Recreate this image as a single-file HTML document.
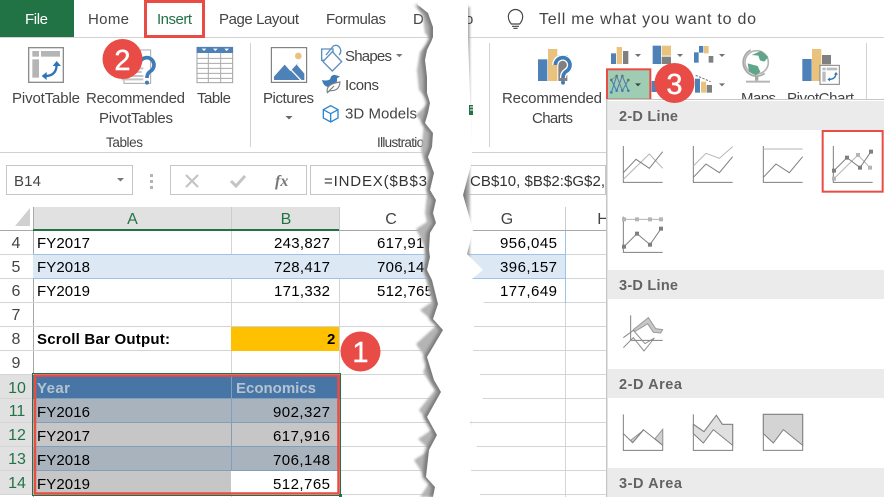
<!DOCTYPE html>
<html><head><meta charset="utf-8"><style>
html,body{margin:0;padding:0;background:#fff;width:884px;height:497px;overflow:hidden}
svg{display:block}
text{font-family:"Liberation Sans",sans-serif}
.r{font-size:15px;fill:#444}
.c{font-size:15px;fill:#000}
.h{font-size:16px;fill:#444;text-anchor:middle}
.g{font-size:16px;fill:#217346;text-anchor:middle}
.m{font-size:14.500px;font-weight:bold;fill:#636363}
</style></head><body>
<svg width="884" height="497" viewBox="0 0 884 497" xmlns="http://www.w3.org/2000/svg">
<defs>
<filter id="b" x="-20%" y="-5%" width="140%" height="110%"><feGaussianBlur stdDeviation="1"/></filter>
<filter id="b2" x="-20%" y="-5%" width="140%" height="110%"><feGaussianBlur stdDeviation="1.600"/></filter>
<clipPath id="co"><rect x="468" y="0" width="10" height="37"/></clipPath>
<clipPath id="cm"><rect x="700" y="40" width="184" height="59"/></clipPath>
</defs>
<rect width="884" height="497" fill="#fff"/>

<!-- tabs -->
<rect x="0" y="0" width="74" height="37" fill="#217346"/>
<rect x="204" y="37" width="680" height="1" fill="#d2d2d2"/>
<rect x="0" y="37" width="145" height="1" fill="#d2d2d2"/>
<text x="25" y="24" font-size="15" fill="#fff" textLength="23">File</text>
<text class="r" x="88" y="24" textLength="41">Home</text>
<text x="157" y="24" font-size="15" fill="#217346" textLength="35">Insert</text>
<text class="r" x="219" y="24" textLength="80">Page Layout</text>
<text class="r" x="326" y="24" textLength="60">Formulas</text>
<text class="r" x="413" y="24" textLength="34">Data</text>
<rect x="145.500" y="1.500" width="58" height="35" fill="none" stroke="#e84c44" stroke-width="3"/>

<!-- ribbon bottom -->
<rect x="0" y="152" width="606" height="1" fill="#d2d2d2"/>
<rect x="250" y="43" width="1" height="104" fill="#d2d2d2"/>
<rect x="489" y="43" width="1" height="104" fill="#d2d2d2"/>
<rect x="866" y="43" width="1" height="56" fill="#d2d2d2"/>

<text class="r" x="12" y="103" textLength="68">PivotTable</text>
<text class="r" x="86" y="103" textLength="99">Recommended</text>
<text class="r" x="99" y="123" textLength="74">PivotTables</text>
<text class="r" x="197" y="103" textLength="34">Table</text>
<text x="106" y="147" font-size="13.500" fill="#444" textLength="37">Tables</text>
<text class="r" x="263" y="103" textLength="51">Pictures</text>
<path d="M285.500,116l3.500,3.500 3.500,-3.500z" fill="#666"/>
<text class="r" x="345" y="61" textLength="47">Shapes</text>
<path d="M396,54h6.500l-3.250,3.250z" fill="#777"/>
<text class="r" x="345" y="90" textLength="34">Icons</text>
<text class="r" x="345" y="118.500" textLength="72">3D Models</text>
<text x="377" y="147" font-size="13.500" fill="#444" textLength="60">Illustrations</text>

<!-- left ribbon icons -->
<g transform="scale(.33333)">
 <rect x="86" y="143" width="104" height="104" fill="#fff" stroke="#8c8c8c" stroke-width="4"/>
 <rect x="97" y="153" width="20" height="17" fill="#b5b5b5"/><rect x="123" y="153" width="57" height="17" fill="#b5b5b5"/><rect x="97" y="178" width="20" height="55" fill="#b5b5b5"/>
 <path d="M136,228Q168,228 170,196" fill="none" stroke="#2e75b6" stroke-width="7"/>
 <path d="M158,198l12,-15 13,15zM140,216l-15,12 15,12z" fill="#2e75b6"/>
 <rect x="372" y="150" width="80" height="100" fill="#fff" stroke="#a8a8a8" stroke-width="3"/>
 <path d="M365,205h65M365,216h60M365,228h65M365,238h65" stroke="#c4c4c4" stroke-width="6"/>
 <path d="M418,195a22,22 0 1 1 33,19q-10,6 -10,20" fill="none" stroke="#3f7cb7" stroke-width="11"/>
 <circle cx="441" cy="248" r="6" fill="#3f7cb7"/>
 <rect x="591" y="142" width="107" height="106" fill="#fff" stroke="#a0a0a0" stroke-width="3"/>
 <rect x="590" y="141" width="109" height="18" fill="#4e81b8"/>
 <path d="M605,146h14l-7,7zM639,146h14l-7,7zM673,146h14l-7,7z" fill="#fff"/>
 <path d="M591,175h107M591,190h107M591,205h107M591,220h107M591,235h107M625,159v89M662,159v89" stroke="#aaa" stroke-width="3" fill="none"/>
 <rect x="814" y="143" width="106" height="104" fill="#fff" stroke="#6a6a6a" stroke-width="3"/>
 <circle cx="895" cy="168" r="10" fill="#e9c37d"/>
 <path d="M822,240v-10l32,-36 18,20 18,-20 23,27v19zM876,220l-6,-5 24,-26" fill="#4e81b8"/>
 <path d="M867,203l40,42" stroke="#fff" stroke-width="4"/>
 <path d="M965,147h34v34h-34zM978,165l22,-27q12,-6 20,6q6,12 -3,21" fill="#fff" stroke="#5b8fc0" stroke-width="4"/>
 <path d="M997,155l28,30 -28,28 -28,-28z" fill="#fff" stroke="#5b8fc0" stroke-width="4"/>
 <path d="M966,240q14,4 24,-2l3,-8q6,-8 16,-4l11,3 -9,6q2,20 -18,26h-10q-14,-4 -17,-21z" fill="#3f7cb7"/>
 <path d="M982,278q-6,-26 38,-32q-2,28 -30,26zM982,278l20,-20" fill="#fff" stroke="#808080" stroke-width="3.500"/>
 <path d="M992,317l22,12v25l-22,12 -22,-12v-25zM970,329l22,12 22,-12M992,341v25" fill="none" stroke="#2e86cf" stroke-width="4"/>
</g>

<!-- formula bar -->
<rect x="6.500" y="165.500" width="126" height="29" fill="#fff" stroke="#c6c6c6"/>
<text x="14" y="186" font-size="15" fill="#444" textLength="27">B14</text>
<path d="M117,178h7l-3.500,3.500z" fill="#777"/>
<path d="M150,174h3v3h-3zM150,180h3v3h-3zM150,186h3v3h-3z" fill="#b4b4b4"/>
<rect x="170.500" y="165.500" width="136" height="29" fill="#fff" stroke="#c6c6c6"/>
<path d="M186,175l12,12M198,175l-12,12" stroke="#c4c4c4" stroke-width="2.200"/>
<path d="M231,181l5,5 9,-10" stroke="#c4c4c4" stroke-width="3" fill="none"/>
<text x="275" y="186" font-size="16" font-style="italic" font-weight="bold" fill="#777" style="font-family:'Liberation Serif',serif">fx</text>
<rect x="310.500" y="165.500" width="295" height="29" fill="#fff" stroke="#c6c6c6"/>
<text x="324" y="186" font-size="15" fill="#333" textLength="108">=INDEX($B$3:</text>

<!-- sheet -->
<path d="M15,226L30,208V226Z" fill="#d0d0d0"/>
<rect x="33" y="207" width="198" height="23" fill="#e1e1e1"/>
<rect x="231" y="207" width="108" height="23" fill="#e1e1e1"/>
<rect x="231" y="207" width="1" height="23" fill="#ccc"/>
<rect x="339" y="207" width="1" height="23" fill="#ccc"/>
<rect x="565" y="207" width="1" height="23" fill="#ccc"/>
<rect x="33" y="207" width="1" height="290" fill="#a8a8a8"/>
<rect x="0" y="230" width="606" height="1" fill="#a8a8a8"/>
<rect x="33" y="229" width="306" height="2" fill="#217346"/>
<text class="g" x="132.500" y="224">A</text>
<text class="g" x="286" y="224">B</text>
<text class="h" x="391" y="224">C</text>
<text class="h" x="507" y="224">G</text>
<text class="h" x="603" y="224">H</text>

<!-- row head shading -->
<rect x="0" y="375" width="33" height="120" fill="#e1e1e1"/>

<!-- grid -->
<path d="M0,254.500H606M0,278.500H606M0,302.500H606M0,326.500H606M0,350.500H606M0,374.500H606M0,398.500H606M0,422.500H606M0,446.500H606M0,470.500H606M0,494.500H606" stroke="#d4d4d4" fill="none"/>
<path d="M231.500,231V497M339.500,231V497M565.500,231V497" stroke="#d4d4d4" fill="none"/>

<!-- row 5 -->
<rect x="33" y="254" width="533" height="25" fill="#dce9f5"/>
<rect x="33" y="254" width="533" height="1" fill="#9dc3e6"/>
<rect x="33" y="278" width="533" height="1" fill="#9dc3e6"/>
<rect x="565" y="231" width="1" height="72" fill="#9dc3e6"/>

<!-- row 8 -->
<rect x="231" y="327" width="108" height="24" fill="#ffc000"/>

<!-- table -->
<rect x="33" y="375" width="307" height="24" fill="#4776a6"/>
<rect x="33" y="399" width="307" height="24" fill="#a9b3bd"/>
<rect x="33" y="423" width="307" height="24" fill="#c6c6c6"/>
<rect x="33" y="447" width="307" height="24" fill="#a9b3bd"/>
<rect x="33" y="471" width="198" height="24" fill="#c6c6c6"/>
<rect x="231" y="471" width="108" height="24" fill="#fff"/>
<path d="M35,398.500H339M35,422.500H339M35,446.500H339M35,470.500H339" stroke="#7f9fbd" fill="none"/>
<path d="M231.500,375V471" stroke="#7f9fbd" fill="none"/>
<rect x="32.500" y="373.500" width="308" height="122" fill="none" stroke="#217346"/>
<rect x="35" y="375.500" width="303.500" height="118" fill="none" stroke="#e84c44" stroke-width="2.500"/>
<rect x="339" y="494" width="3" height="3" fill="#217346"/>

<!-- row headers -->
<g font-size="16" text-anchor="middle" fill="#444">
<text x="16" y="248">4</text><text x="16" y="272">5</text><text x="16" y="296">6</text><text x="16" y="320">7</text><text x="16" y="344">8</text><text x="16" y="368">9</text>
</g>
<g font-size="16" text-anchor="middle" fill="#217346">
<text x="17" y="393">10</text><text x="17" y="416">11</text><text x="17" y="440">12</text><text x="17" y="464">13</text><text x="17" y="488">14</text>
</g>

<!-- cells -->
<text class="c" x="37" y="248" textLength="53">FY2017</text>
<text class="c" x="37" y="272" textLength="53">FY2018</text>
<text class="c" x="37" y="296" textLength="53">FY2019</text>
<text class="c" x="274" y="248" textLength="56">243,827</text>
<text class="c" x="274" y="272" textLength="56">728,417</text>
<text class="c" x="274" y="296" textLength="56">171,332</text>
<text class="c" x="377" y="248" textLength="56">617,916</text>
<text class="c" x="377" y="272" textLength="56">706,148</text>
<text class="c" x="377" y="296" textLength="56">512,765</text>
<text class="c" x="37" y="344" font-weight="bold" textLength="133">Scroll Bar Output:</text>
<text class="c" x="327" y="344" font-weight="bold">2</text>
<text x="37" y="393" font-size="15" font-weight="bold" fill="#b5c3d1" textLength="33">Year</text>
<text x="236" y="393" font-size="15" font-weight="bold" fill="#b5c3d1" textLength="80">Economics</text>
<text class="c" x="37" y="417" textLength="53">FY2016</text>
<text class="c" x="37" y="441" textLength="53">FY2017</text>
<text class="c" x="37" y="465" textLength="53">FY2018</text>
<text class="c" x="37" y="489" textLength="53">FY2019</text>
<text class="c" x="273" y="417" textLength="57">902,327</text>
<text class="c" x="273" y="441" textLength="57">617,916</text>
<text class="c" x="273" y="465" textLength="57">706,148</text>
<text class="c" x="273" y="489" textLength="57">512,765</text>

<!-- torn paper: shadow band, dark inner shadow, white strip -->
<path d="M417,7L423,17L425,33L431,40L420,52L417,70L419,90L430,102L416,115L424,125L421,150L428,175L427,195L425,213L427,222L416,229L425,247L425,275L432,302L420,310L437,325L416,344L425,357L428,362L423,372L435,390L419,410L433,429L418,439L430,450L414,460L425,477L430,482L420,497H470V7Z" fill="#b4b4b4" filter="url(#b)"/>
<path d="M418,5L428,13L433,27L433,37L431,42L427,50L425,60L427,77L427,93L430,103L428,113L425,123L433,133L432,147L428,157L434,173L430,190L436,200L433,213L436,223L430,233L429,250L430,257L427,270L432,280L438,304L433,319L443,330L427,357L434,380L441,392L427,417L437,435L429,450L426,477L435,487L433,497H470V5Z" fill="#7a7a7a" filter="url(#b2)" transform="translate(-3.500,0)"/>
<path d="M418,0V5L428,13L433,27L433,37L431,42L427,50L425,60L427,77L427,93L430,103L428,113L425,123L433,133L432,147L428,157L434,173L430,190L436,200L433,213L436,223L430,233L429,250L430,257L427,270L432,280L438,304L433,319L443,330L427,357L434,380L441,392L427,417L437,435L429,450L426,477L435,487L433,497H480V494L471,470L477,446L470,422L483,398L480,374L473,350L474,326L484,302L472,279L483,270L467,254L473,230L463,195L471,165L472,152L468,37V0Z" fill="#fff"/>

<!-- right of tear -->
<text class="r" x="465" y="24" clip-path="url(#co)">o</text>
<rect x="469" y="105" width="4" height="10" fill="#217346"/>
<path d="M470,107h3M470,110h3" stroke="#fff"/>
<g transform="translate(440,0) scale(.33333)">
 <path d="M214,72q-9,-10 -9,-22a21,21 0 1 1 43,0q0,12 -9,22zM216,79h21M220,85h13" fill="none" stroke="#444" stroke-width="3.500"/>
</g>
<text x="539" y="24" font-size="16" fill="#444" textLength="217">Tell me what you want to do</text>
<rect x="484" y="37" width="400" height="1" fill="#d2d2d2"/>
<text x="470" y="186" font-size="15" fill="#333" textLength="135">CB$10, $B$2:$G$2,</text>
<text class="c" x="500" y="248" textLength="57">956,045</text>
<text class="c" x="500" y="272" textLength="57">396,157</text>
<text class="c" x="500" y="296" textLength="57">177,649</text>
<text class="r" x="502" y="103" textLength="100">Recommended</text>
<text class="r" x="532" y="123" textLength="41">Charts</text>
<g clip-path="url(#cm)">
<text class="r" x="741" y="103" textLength="35">Maps</text>
<text class="r" x="787" y="103" textLength="67">PivotChart</text>
</g>

<g transform="translate(440,0) scale(.33333)">
 <!-- recommended charts -->
 <rect x="294" y="178" width="28" height="65" fill="#4e81b8"/>
 <rect x="324" y="147" width="28" height="96" fill="#e9c37d"/>
 <rect x="355" y="165" width="27" height="78" fill="#808080"/>
 <path d="M346,195a22,22 0 1 1 33,19q-10,6 -10,20" fill="none" stroke="#fff" stroke-width="19"/>
 <path d="M346,195a22,22 0 1 1 33,19q-10,6 -10,20" fill="none" stroke="#3f7cb7" stroke-width="11"/>
 <circle cx="369" cy="248" r="6" fill="#3f7cb7"/>
 <!-- column -->
 <rect x="513" y="160" width="15" height="32" fill="#4e81b8"/><rect x="530" y="141" width="16" height="51" fill="#e9c37d"/><rect x="549" y="153" width="16" height="39" fill="#808080"/>
 <path d="M585,162h18l-9,9z" fill="#707070"/>
 <!-- hierarchy -->
 <rect x="638" y="137" width="25" height="55" fill="#4e81b8"/><rect x="665" y="137" width="28" height="30" fill="#e9c37d"/><rect x="665" y="170" width="28" height="22" fill="#808080"/>
 <path d="M711,162h18l-9,9z" fill="#707070"/>
 <!-- waterfall -->
 <rect x="762" y="157" width="14" height="31" fill="#4e81b8"/><rect x="777" y="138" width="13" height="20" fill="#4e81b8"/><rect x="792" y="138" width="14" height="22" fill="#e9c37d"/><rect x="806" y="168" width="14" height="20" fill="#808080"/>
 <path d="M837,162h18l-9,9z" fill="#707070"/>
 <!-- selected line btn -->
 <rect x="501" y="208" width="130" height="91" fill="#9fcdb3" stroke="#e84c44" stroke-width="6"/>
 <path d="M514,278L530,228 547,272 565,240M514,240L530,272 547,228 565,272" fill="none" stroke="#3f7cb7" stroke-width="3"/>
 <path d="M514,240L530,228 547,272 565,240" fill="none" stroke="#808080" stroke-width="2"/>
 <g fill="#707070"><circle cx="514" cy="240" r="4"/><circle cx="530" cy="228" r="4"/><circle cx="547" cy="228" r="4"/><circle cx="565" cy="240" r="4"/></g>
 <g fill="#3f7cb7"><circle cx="514" cy="277" r="4"/><circle cx="530" cy="272" r="4"/><circle cx="547" cy="272" r="4"/><circle cx="565" cy="272" r="4"/></g>
 <path d="M585,250h18l-9,9z" fill="#444"/>
 <!-- bar behind badge -->
 <rect x="635" y="243" width="18" height="33" fill="#4e81b8"/>
 <!-- combo -->
 <rect x="765" y="236" width="15" height="42" fill="#4e81b8"/><rect x="783" y="245" width="15" height="33" fill="#e9c37d"/><rect x="800" y="255" width="16" height="23" fill="#808080"/>
 <path d="M767,226L812,245" stroke="#707070" stroke-width="3" stroke-dasharray="7 4"/>
 <path d="M837,250h18l-9,9z" fill="#707070"/>
 <!-- maps -->
 <circle cx="950" cy="187" r="35" fill="#fff" stroke="#b5b5b5" stroke-width="5"/>
 <path d="M935,165l28,-12 22,18 -12,14 -13,-4 -5,-14zM923,190l30,8 8,18 -14,10 -20,-12z" fill="#5fa58a"/>
 <path d="M932,150a42,42 0 0 0 -4,72q24,14 46,-2" fill="none" stroke="#a8a8a8" stroke-width="5"/>
 <rect x="945" y="226" width="10" height="16" fill="#a8a8a8"/>
 <rect x="918" y="242" width="72" height="6" fill="#b5b5b5"/>
 <!-- pivotchart -->
 <rect x="1087" y="177" width="28" height="66" fill="#4e81b8"/><rect x="1116" y="147" width="28" height="96" fill="#e9c37d"/><rect x="1146" y="165" width="27" height="28" fill="#808080"/>
 <rect x="1140" y="196" width="58" height="57" fill="#fff" stroke="#808080" stroke-width="3"/>
 <rect x="1147" y="203" width="10" height="8" fill="#bbb"/><rect x="1160" y="203" width="32" height="8" fill="#bbb"/><rect x="1147" y="215" width="10" height="30" fill="#bbb"/>
 <path d="M1167,238Q1186,238 1188,222" fill="none" stroke="#2e75b6" stroke-width="4"/>
 <path d="M1182,224l6,-8 6,8zM1170,233l-8,5 8,6z" fill="#2e75b6"/>
</g>

<!-- dropdown menu -->
<rect x="606" y="99" width="278" height="398" fill="#fff"/>
<rect x="606" y="99" width="278" height="1" fill="#c6c6c6"/>
<rect x="606" y="99" width="1.500" height="398" fill="#c6c6c6"/>
<rect x="608" y="101" width="276" height="29" fill="#ebebeb"/>
<rect x="608" y="270" width="276" height="29" fill="#ebebeb"/>
<rect x="608" y="369" width="276" height="29" fill="#ebebeb"/>
<rect x="608" y="468" width="276" height="29" fill="#ebebeb"/>
<text class="m" x="619" y="121" textLength="59">2-D Line</text>
<text class="m" x="619" y="290" textLength="59">3-D Line</text>
<text class="m" x="619" y="389" textLength="63">2-D Area</text>
<text class="m" x="619" y="488" textLength="63">3-D Area</text>

<g transform="translate(600,100) scale(.33333)" fill="none" stroke-width="3">
 <path d="M70,138V247H188M280,138V247H398M490,138V247H608M700,138V247H818M70,350V457H188" stroke="#7f7f7f"/>
 <path d="M70,238L148,162L188,205" stroke="#b5b5b5"/><path d="M70,218L108,178L148,205L188,155" stroke="#7f7f7f"/>
 <path d="M280,198L318,160L358,175L398,140" stroke="#b5b5b5"/><path d="M280,232L318,192L358,218L398,170" stroke="#7f7f7f"/>
 <path d="M490,147H608" stroke="#b5b5b5"/><path d="M490,232L528,192L568,218L608,170" stroke="#7f7f7f"/>
 <path d="M702,236L774,165L810,203" stroke="#b5b5b5"/><path d="M702,212L741,173L780,203L813,155" stroke="#7f7f7f"/>
 <g fill="#b5b5b5" stroke="none"><rect x="696" y="230" width="12" height="12"/><rect x="768" y="159" width="12" height="12"/><rect x="804" y="197" width="12" height="12"/></g>
 <g fill="#7f7f7f" stroke="none"><rect x="696" y="206" width="12" height="12"/><rect x="735" y="167" width="12" height="12"/><rect x="774" y="197" width="12" height="12"/><rect x="807" y="149" width="12" height="12"/></g>
 <rect x="668" y="93" width="180" height="182" stroke="#e84c44" stroke-width="6"/>
 <path d="M72,358H183" stroke="#b5b5b5"/><path d="M72,440L111,401L150,434L183,386" stroke="#7f7f7f"/>
 <g fill="#b5b5b5" stroke="none"><rect x="66" y="352" width="12" height="12"/><rect x="105" y="352" width="12" height="12"/><rect x="144" y="352" width="12" height="12"/><rect x="177" y="352" width="12" height="12"/></g>
 <g fill="#7f7f7f" stroke="none"><rect x="66" y="434" width="12" height="12"/><rect x="105" y="395" width="12" height="12"/><rect x="144" y="428" width="12" height="12"/><rect x="177" y="380" width="12" height="12"/></g>
</g>
<g transform="translate(600,297) scale(.33333)" fill="none" stroke-width="3">
 <path d="M92,55V130H188" stroke="#7f7f7f"/>
 <path d="M100,98L145,62L167,95L188,98L182,108L160,106L143,80L104,104Z" fill="#c8c8c8" stroke="#999"/>
 <path d="M70,122L100,100L135,140L163,123L132,162L100,122L70,152" stroke="#8a8a8a"/>
 <!-- area -->
 <path d="M70,352V460H188V397" stroke="#7f7f7f"/>
 <path d="M92,430L98,437L130,400ZM165,425L188,397V445Z" fill="#d0d0d0" stroke="#999"/>
 <path d="M70,410L98,437L130,398L188,445" stroke="#7f7f7f"/>
 <path d="M280,352V460H398V382H367L349,355L312,404L280,382" fill="none" stroke="#7f7f7f"/>
 <path d="M280,382L312,404L349,355L367,382H398V445L340,398L310,438L280,410Z" fill="#e0e0e0" stroke="#7f7f7f"/>
 <rect x="490" y="352" width="118" height="108" stroke="#7f7f7f"/>
 <path d="M490,352H608V445L550,398L520,438L490,410Z" fill="#d4d4d4" stroke="#7f7f7f"/>
</g>

<!-- badges -->
<g fill="#e94c46">
<circle cx="122.500" cy="59" r="20"/><circle cx="674.500" cy="83" r="20"/><circle cx="360.500" cy="351.500" r="20"/>
</g>
<g font-size="29" fill="#fff" text-anchor="middle" stroke="#fff" stroke-width=".4">
<text x="122.500" y="70">2</text><text x="674.500" y="94">3</text><text x="360.500" y="362">1</text>
</g>
</svg>
</body></html>
